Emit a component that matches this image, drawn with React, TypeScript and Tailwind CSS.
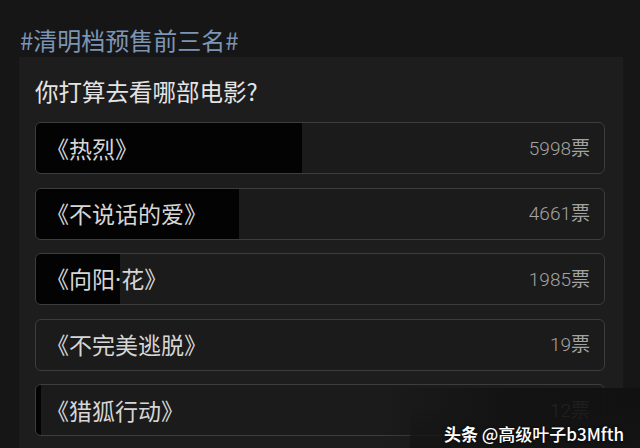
import React from "react";

const rows = [
  { name: "《热烈》", votes: "5998", pct: 46.9 },
  { name: "《不说话的爱》", votes: "4661", pct: 35.8 },
  { name: "dot", votes: "1985", pct: 14.8 },
  { name: "《不完美逃脱》", votes: "19", pct: 0 },
  { name: "《猎狐行动》", votes: "12", pct: 0.9 },
];

export default function App() {
  return (
    <div
      className="relative w-[640px] h-[448px] overflow-hidden bg-[#161616]"
      style={{ fontFamily: '"Noto Sans CJK SC", "Noto Sans", sans-serif' }}
    >
      <div className="pl-[20px] pt-[24px] h-[57px] text-[24px] leading-[32px] text-[#7d95b5]">
        #清明档预售前三名#
      </div>
      <div className="ml-[19px] w-[604px] h-[400px] bg-[#1d1d1d] pl-[16px] pr-[18px] pt-[12px]">
        <div className="h-[44px] leading-[44px] text-[23.5px] text-[#e4e4e4]">你打算去看哪部电影?</div>
        <div className="mt-[9px] flex flex-col gap-[13.5px]">
          {rows.map((r) => (
            <div
              key={r.votes}
              className="relative h-[52px] rounded-[6px] border border-[#3d3d3d] bg-[#1b1b1b] overflow-hidden flex items-center justify-between"
            >
              <div className="absolute left-0 top-0 bottom-0 bg-[#030303]" style={{ width: `${r.pct}%` }} />
              <span className="relative pl-[10px] text-[23px] text-[#d6d6d6]">
                {r.name === "dot" ? (
                  <>
                    《向阳<span style={{ fontFamily: '"Noto Sans", sans-serif' }}>·</span>花》
                  </>
                ) : (
                  r.name
                )}
              </span>
              <span className="relative pr-[14px] text-[19px] text-[#a3a3a3]">
                <span style={{ fontFamily: 'Roboto, sans-serif', fontWeight: 300 }}>{r.votes}</span>
                <span>票</span>
              </span>
            </div>
          ))}
        </div>
      </div>
      <div className="absolute right-0 bottom-0 w-[260px] h-[60px] bg-gradient-to-r from-transparent via-[#111111]/80 to-[#111111]" />
      <div className="absolute right-0 bottom-0 w-[230px] h-[42px] bg-gradient-to-t from-[#141414] to-transparent" />
      <div
        className="absolute right-[16px] bottom-[2px] text-[17px] leading-[24px] text-white whitespace-nowrap"
        style={{ textShadow: "0 0 3px rgba(0,0,0,0.9)" }}
      >
        <span className="font-bold">头条</span> <span className="font-medium">@高级叶子b3Mfth</span>
      </div>
    </div>
  );
}
